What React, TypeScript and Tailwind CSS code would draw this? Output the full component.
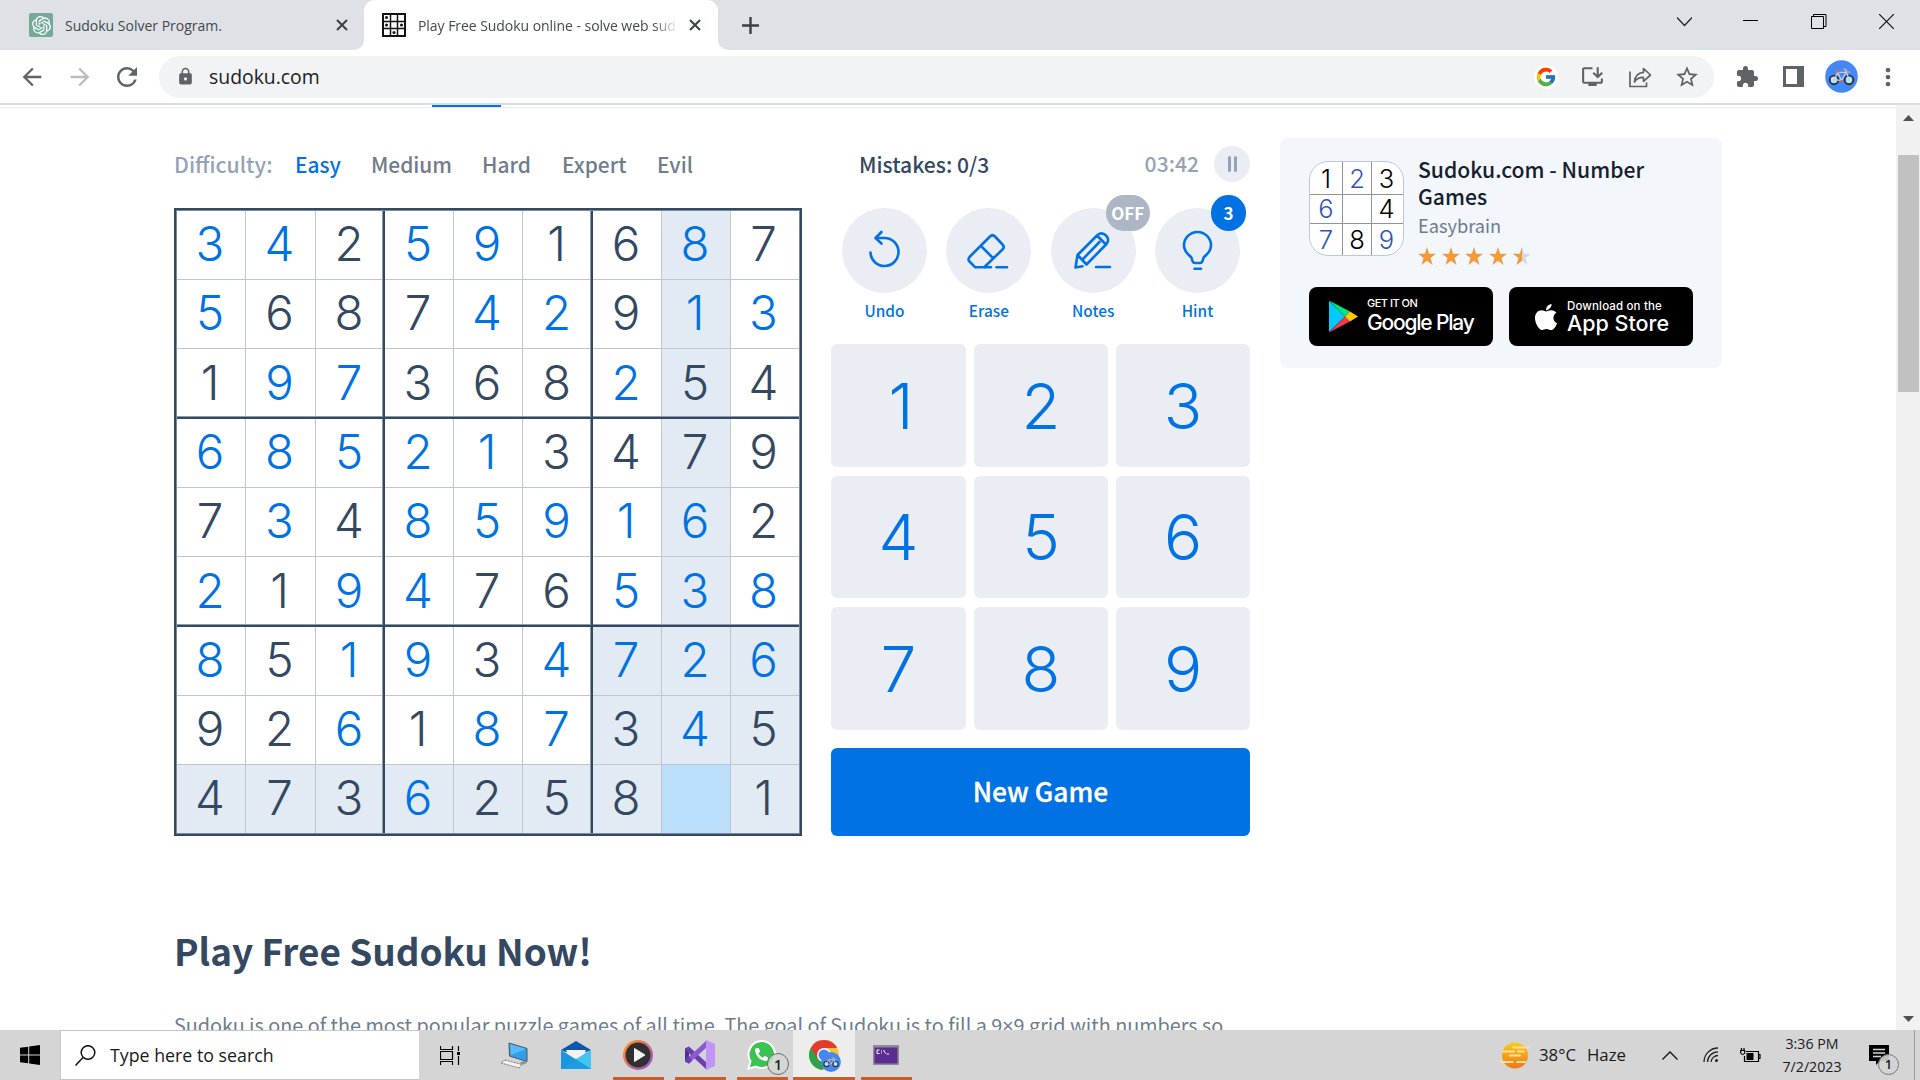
import type { ReactNode } from "react";
import { FcGoogle } from "react-icons/fc";
import { SiOpenai } from "react-icons/si";
import { FaApple, FaPhoneAlt } from "react-icons/fa";
import { MdArrowBack, MdArrowForward, MdRefresh, MdLock, MdInstallDesktop, MdStarBorder, MdExtension, MdMoreVert } from "react-icons/md";

/* digit rows; "b" after a digit marks a value entered by the player */
const ROWS = [
  "3b 4b 2 5b 9b 1 6 8b 7",
  "5b 6 8 7 4b 2b 9 1b 3b",
  "1 9b 7b 3 6 8 2b 5 4",
  "6b 8b 5b 2b 1b 3 4 7 9",
  "7 3b 4 8b 5b 9b 1b 6b 2",
  "2b 1 9b 4b 7 6 5b 3b 8b",
  "8b 5 1b 9b 3 4b 7b 2b 6b",
  "9 2 6b 1 8b 7b 3 4b 5",
  "4 7 3 6b 2 5 8 . 1",
].map((r) => r.split(" "));

const LINES: Record<string, string> = {
  "thin-thin": "shadow-[inset_-1px_0_#bec6d4,inset_0_-1px_#bec6d4]",
  "thick-thin": "shadow-[inset_-2px_0_#344861,inset_-3px_0_#8f9bab,inset_0_-1px_#bec6d4]",
  "none-thin": "shadow-[inset_0_-1px_#bec6d4]",
  "thin-thick": "shadow-[inset_0_-2px_#344861,inset_0_-3px_#8f9bab,inset_-1px_0_#bec6d4]",
  "thick-thick": "shadow-[inset_-2px_0_#344861,inset_0_-2px_#344861,inset_-3px_0_#8f9bab,inset_0_-3px_#8f9bab]",
  "none-thick": "shadow-[inset_0_-2px_#344861,inset_0_-3px_#8f9bab]",
  "thin-none": "shadow-[inset_-1px_0_#bec6d4]",
  "thick-none": "shadow-[inset_-2px_0_#344861,inset_-3px_0_#8f9bab]",
  "none-none": "",
};
const kind = (i: number) => (i === 8 ? "none" : i % 3 === 2 ? "thick" : "thin");

function cellBg(r: number, c: number) {
  if (r === 8 && c === 7) return "bg-[#bbdefb]";
  if (r === 8 || c === 7 || (r >= 6 && c >= 6)) return "bg-[#e2ebf3]";
  return "bg-white";
}

function Board() {
  return (
    <div className="h-[628px] w-[628px] border-2 border-[#344861]">
      <div className="grid h-full w-full grid-cols-[69px_70px_69px_69px_69px_70px_69px_69px_68px] grid-rows-[69px_69px_70px_69px_69px_70px_69px_69px_68px] border border-[#7d8a9c] font-[Inter,sans-serif] text-[47.500px] leading-none font-light">
        {ROWS.map((row, r) =>
          row.map((v, c) => (
            <div key={`${r}${c}`} className={`flex items-center justify-center pr-[3px] pb-[3px] ${cellBg(r, c)} ${LINES[`${kind(c)}-${kind(r)}`]} ${v.endsWith("b") ? "text-[#0072e3]" : "text-[#344861]"}`}>
              {v === "." ? "" : v[0]}
            </div>
          )),
        )}
      </div>
    </div>
  );
}

function BikeAvatar({ size }: { size: number }) {
  return (
    <svg width={size} height={size} viewBox="0 0 34 34" fill="none">
      <circle cx="17" cy="17" r="16.8" fill="#4487f6" />
      <circle cx="9.3" cy="20.5" r="4.4" fill="#b9e3f5" stroke="#27323c" strokeWidth="2" />
      <circle cx="24.7" cy="20.5" r="4.4" fill="#b9e3f5" stroke="#27323c" strokeWidth="2" />
      <path d="M9.3 20.5 13 13l9-.5-5 8.5-4-8M17 21l-7.700-.5M24.700 20.500 21.500 10" stroke="#c3cfe0" strokeWidth="1.300" />
      <path d="M10.500 11.800h4.500M17 20.500v2" stroke="#e5683f" strokeWidth="2" />
      <path d="M19 9.500h3M23 12.500h3" stroke="#f0a08a" strokeWidth="1.500" />
    </svg>
  );
}

function TabStrip() {
  return (
    <header className="flex h-[50px] bg-[#dee1e6] font-['Open_Sans',sans-serif] text-[14px] text-[#45484c]">
      <div className="flex w-[364px] items-center pl-[29px]">
        <div className="flex h-6 w-6 items-center justify-center rounded-[2px] bg-[#75a99c] text-white"><SiOpenai size={19} /></div>
        <span className="ml-3 w-[271px]">Sudoku Solver Program.</span>
        <svg width="12" height="12" viewBox="0 0 12 12" stroke="#3c4043" strokeWidth="2"><path d="M1 1l10 10M11 1L1 11" /></svg>
      </div>
      <div className="relative flex w-[354px] items-center rounded-t-[11px] bg-white pl-[18px]">
        <svg className="absolute bottom-0 -left-[10px]" width="10" height="10" fill="#fff"><path d="M10 0v10H0A10 10 0 0 0 10 0" /></svg>
        <svg className="absolute -right-[10px] bottom-0" width="10" height="10" fill="#fff"><path d="M0 0v10h10A10 10 0 0 1 0 0" /></svg>
        <svg width="24" height="24" viewBox="0 0 24 24" fill="none" stroke="#111">
          <path d="M1 1h22v22H1z" strokeWidth="2" />
          <path d="M8.500 1v22M15.500 1v22M1 8.500h22M1 15.500h22" strokeWidth="1.500" />
          <g fill="#111" stroke="none"><circle cx="4.500" cy="4.500" r="1.500" /><circle cx="4.500" cy="12" r="1.500" /><circle cx="19.500" cy="12" r="1.500" /><circle cx="12" cy="19.500" r="1.500" /></g>
        </svg>
        <span className="ml-3 w-[258px] overflow-hidden tracking-[-0.050px] whitespace-nowrap [mask-image:linear-gradient(to_right,#000_235px,transparent_260px)]">Play Free Sudoku online - solve web sudoku</span>
        <svg className="ml-[13px]" width="12" height="12" viewBox="0 0 12 12" stroke="#3c4043" strokeWidth="2"><path d="M1 1l10 10M11 1L1 11" /></svg>
      </div>
      <div className="flex w-[65px] items-center justify-center">
        <svg width="17" height="17" viewBox="0 0 17 17" stroke="#3c4043" strokeWidth="2.400"><path d="M8.500 0v17M0 8.500h17" /></svg>
      </div>
      <div className="ml-auto flex items-start pt-[14px] pr-[26px]">
        <svg width="15" height="15" viewBox="0 0 15 15" fill="none" stroke="#222" strokeWidth="1.200"><path d="M0 3.500l7.500 8 7.500-8" /></svg>
        <svg className="ml-[51px]" width="15" height="15" viewBox="0 0 15 15"><path d="M0 6h15v1H0z" /></svg>
        <svg className="ml-[53px]" width="16" height="15" viewBox="0 0 16 15" fill="none" stroke="#000"><path d="M.500 2.500h12v12h-12zM2.500 2V.500h12.500v12h-2" /></svg>
        <svg className="ml-[52px]" width="15" height="15" viewBox="0 0 15 15" stroke="#111" strokeWidth="1.200"><path d="M0 0l15 15M15 0L0 15" /></svg>
      </div>
    </header>
  );
}

function Toolbar() {
  return (
    <div className="flex h-[55px] items-center border-b-2 border-[#dcdcdc] bg-white pl-[18px] text-[#5f6368]">
      <MdArrowBack size={28} className="shrink-0" />
      <MdArrowForward size={28} className="ml-[20px] shrink-0 text-[#babcbe]" />
      <MdRefresh size={30} className="ml-[18px] shrink-0" />
      <div className="ml-[17px] flex h-[42px] w-[1555px] items-center rounded-full bg-[#f1f3f4] pl-[17px]">
        <MdLock size={19} />
        <span className="ml-[14px] font-['Open_Sans',sans-serif] text-[19.400px] text-[#202124]">sudoku.com</span>
        <div className="mr-[14px] ml-auto flex items-center">
          <span className="flex h-6 w-6 items-center justify-center rounded-full bg-white"><FcGoogle size={22} /></span>
          <MdInstallDesktop size={25} className="ml-[22px]" />
          <svg className="ml-[24px]" width="23" height="22" viewBox="0 0 23 22" fill="none" stroke="#5f6368" strokeWidth="1.700">
            <path d="M1 5.500V20.500h16.500v-4" />
            <path d="M5.500 16c.4-5.500 3.500-9.200 9-9.600V2.500l7 6.500-7 6.300v-3.900c-4.200 0-7 1.300-9 4.600z" strokeLinejoin="round" />
          </svg>
          <MdStarBorder size={26} className="ml-[22px]" />
        </div>
      </div>
      <MdExtension size={24} className="ml-[21px]" />
      <svg className="ml-[24px]" width="21" height="21" viewBox="0 0 21 21" fill="#5f6368"><path fillRule="evenodd" d="M0 0h21v21H0zM3 3v15h11V3z" /></svg>
      <span className="ml-[21px]"><BikeAvatar size={33} /></span>
      <MdMoreVert size={28} className="ml-[16px]" />
    </div>
  );
}

function Tool({ label, badge, badgeClass, children }: { label: string; badge?: string; badgeClass?: string; children: ReactNode }) {
  return (
    <div className="flex w-[85px] flex-col items-center">
      <div className="relative flex h-[85px] w-[85px] items-center justify-center rounded-full bg-[#eaeef4]">
        <svg width="44" height="44" viewBox="0 0 44 44" fill="none" stroke="#0072e3" strokeWidth="2.600" strokeLinecap="round" strokeLinejoin="round">{children}</svg>
        {badge && <span className={`absolute -top-[13px] flex h-9 items-center justify-center rounded-full pb-px text-[17px] leading-5 font-bold text-white ${badgeClass}`}>{badge}</span>}
      </div>
      <span className="mt-[7px] flex h-[22px] items-center text-[15.400px] font-medium text-[#0072e3]">{label}</span>
    </div>
  );
}

function Star({ half }: { half?: boolean }) {
  const d = "M8.500 0l2 6.400h6.500l-5.200 4 2 6.600-5.300-4.100L3.200 17l2-6.600L0 6.400h6.500z";
  return (
    <svg width="18" height="18" viewBox="0 0 17 17">
      <path d={d} fill={half ? "#d3d9e6" : "#f29a38"} />
      {half && <path d="M8.500 0v12.900L3.200 17l2-6.600L0 6.400h6.500z" fill="#f29a38" />}
    </svg>
  );
}

function AppCard() {
  return (
    <aside className="mt-[30px] ml-[30px] h-[230px] w-[442px] rounded-lg bg-[#f3f6fb] px-[29px] pt-[23px]">
      <div className="flex h-[118px]">
        <div className="grid h-[95px] w-[95px] shrink-0 grid-cols-[33px_29px_31px] grid-rows-[33px_29px_31px] overflow-hidden rounded-[19px] border border-[#bcc7da] bg-white font-[Inter,sans-serif] text-[25.500px] leading-none font-light">
          {["1", "2b", "3", "6b", "", "4", "7b", "8", "9b"].map((v, i) => (
            <span key={i} className={`flex items-center justify-center ${i % 3 < 2 ? "border-r border-r-[#8f939b]" : ""} ${i < 6 ? "border-b border-b-[#8f939b]" : ""} ${i < 3 ? "pt-0.5" : ""} ${i % 3 === 2 ? "pr-0.5" : ""} ${v.endsWith("b") ? "text-[#2f55b8]" : "text-black"}`}>{v[0]}</span>
          ))}
        </div>
        <div className="-mt-[6px] ml-[14px]">
          <div className="text-[21.150px] leading-[27px] font-medium text-[#14202e]">Sudoku.com - Number<br />Games</div>
          <div className="mt-[3px] text-[18.200px] leading-[26px] text-[#6e7c8c]">Easybrain</div>
          <div className="mt-[9px] flex gap-[5.700px]"><Star /><Star /><Star /><Star /><Star half /></div>
        </div>
      </div>
      <div className="mt-2 flex gap-4 font-[Inter,sans-serif] text-white">
        <div className="flex h-[59px] w-[184px] items-center rounded-lg bg-black pl-[20px]">
          <svg width="29" height="33" viewBox="0 0 29 33"><path d="M0 1v31l16-15.500z" fill="#00cbfb" /><path d="M0 .500l21 11-5 5z" fill="#00e676" /><path d="M0 32.500l21-11-5-5z" fill="#f5384b" /><path d="M21 11.500l8 5-8 5-5-5z" fill="#fdc900" /></svg>
          <div className="-mt-[1px] ml-[9px]">
            <div className="text-[11px] leading-[13px] font-medium tracking-[-0.500px]">GET IT ON</div>
            <div className="text-[21px] leading-[25px] font-medium tracking-[-1.200px]">Google Play</div>
          </div>
        </div>
        <div className="flex h-[59px] w-[184px] items-center rounded-lg bg-black pl-[22px]">
          <FaApple size={30} />
          <div className="ml-[6px]">
            <div className="text-[11.500px] leading-[14px] font-medium tracking-[0.150px]">Download on the</div>
            <div className="text-[21.500px] leading-[21px] font-medium">App Store</div>
          </div>
        </div>
      </div>
    </aside>
  );
}

function Page() {
  return (
    <main className="flex h-[925px] overflow-hidden bg-white font-['Noto_Sans_CJK_SC',sans-serif]">
      <div className="w-[1896px]">
        <div className="h-[3px] border-b border-[#e6eaf2]"><div className="ml-[432px] h-[2px] w-[69px] bg-[#0072e3]" /></div>
        <div className="flex pl-[174px]">
          <section className="w-[628px]">
            <nav className="mt-[41px] mb-[27px] flex h-8 items-center text-[20.900px] font-medium text-[#6e7c8c]">
              <span className="w-[121px] pb-0.5 text-[21.300px] text-[#94a3b7]">Difficulty:</span>
              <span className="w-[76px] text-[#0072e3]">Easy</span>
              <span className="w-[111px]">Medium</span>
              <span className="w-[80px]">Hard</span>
              <span className="w-[95px]">Expert</span>
              <span>Evil</span>
            </nav>
            <Board />
          </section>
          <section className="ml-[29px] w-[419px]">
            <div className="mt-[38px] mb-[26px] flex h-9 items-center pl-[28px] text-[21.100px] font-medium text-[#344861]">
              <span className="pt-0.5">Mistakes: 0/3</span>
              <span className="ml-auto text-[#94a3b7]">03:42</span>
              <span className="ml-[15px] flex h-9 w-9 items-center justify-center gap-[3px] rounded-full bg-[#eaeef4]">
                <i className="h-4 w-[3px] rounded-full bg-[#94a3b7]" /><i className="h-4 w-[3px] rounded-full bg-[#94a3b7]" />
              </span>
            </div>
            <div className="flex justify-between pr-[10px] pl-[11px]">
              <Tool label="Undo">
                <path d="M7.500 23.500a14 14 0 1 0 14-14.500h-8" /><path d="M18.500 3l-6 6 6 5.500" />
              </Tool>
              <Tool label="Erase">
                <path d="M9 38.300h15M29.500 38.300h10.500" /><path d="M17.500 38l18-17.500q2.500-2.500 0-5l-7.500-8q-2.500-2.500-5 0L3 27.500q-3 3 0 5.500l5 5.200M14.500 17.500l11.500 11.500" />
              </Tool>
              <Tool label="Notes" badge="OFF" badgeClass="left-[55px] w-11 bg-[#adb6c5]">
                <path d="M6.500 26L26.500 6q4.500-3.500 8.500.5t.5 8.500L15.500 35.500 6.500 26zl-2 12.500 7-1.200M26 6.500l9 9M12 30L28.500 13M25 38h14" />
              </Tool>
              <Tool label="Hint" badge="3" badgeClass="left-[56px] w-[35px] bg-[#0072e3]">
                <path d="M16 28c-3-2.500-7-5.500-7-11.500a13.500 13.500 0 0 1 27 0c0 6-4 9-7 11.500-1.500 1.500-.5 6-4 6h-5c-3.500 0-2.500-4.500-4-6zM19.500 39.800h6.500" />
              </Tool>
            </div>
            <div className="mt-[22px] grid h-[386px] grid-cols-[135px_134px_134px] grid-rows-3 gap-x-2 gap-y-[9px] font-[Inter,sans-serif] text-[63.500px] leading-none font-light text-[#0072e3]">
              {[1, 2, 3, 4, 5, 6, 7, 8, 9].map((n) => (
                <button key={n} className={`flex items-center justify-center rounded-md bg-[#eaeef4] ${n < 4 ? "pt-px" : ""} ${n === 1 ? "pl-[5px]" : ""}`}>{n}</button>
              ))}
            </div>
            <button className="mt-[18px] flex h-[88px] w-full items-center justify-center rounded-md bg-[#0072e3] pb-0.5 text-[26.400px] font-medium text-white [-webkit-text-stroke:0.300px_#fff]">New Game</button>
          </section>
          <AppCard />
        </div>
        <article className="pl-[174px]">
          <h1 className="mt-[94px] flex h-10 items-center text-[36.900px] leading-none font-bold text-[#344861]">Play Free Sudoku Now!</h1>
          <p className="mt-10 h-[30px] text-[19.800px] leading-[30px] whitespace-nowrap text-[#6e7c8c]">
            Sudoku is one of the most popular puzzle games of all time. The goal of Sudoku is to fill a 9<span className="font-['Noto_Sans',sans-serif]">×</span>9 grid with numbers so
          </p>
        </article>
      </div>
      <div className="flex w-6 flex-col items-center bg-[#f1f1f1] pt-[10px] pb-[8px]">
        <svg width="11" height="6" viewBox="0 0 11 6" fill="#505050"><path d="M5.500 0L11 6H0z" /></svg>
        <div className="mt-[34px] h-[237px] w-[21px] bg-[#c1c1c1]" />
        <svg className="mt-auto" width="11" height="6" viewBox="0 0 11 6" fill="#505050"><path d="M5.500 6L11 0H0z" /></svg>
      </div>
    </main>
  );
}

function TaskItem({ running, active, children }: { running?: boolean; active?: boolean; children: ReactNode }) {
  return (
    <div className={`flex h-[50px] w-[62px] flex-col items-center ${active ? "bg-[#ededed]" : ""}`}>
      <div className="relative flex h-[47px] items-center pt-[3px]">{children}</div>
      {running && <div className={`h-[3px] bg-[#c95d2a] ${active ? "w-[62px]" : "w-[51px]"}`} />}
    </div>
  );
}

function Taskbar() {
  return (
    <footer className="flex h-[50px] items-center bg-[#d5d5d6] font-['Open_Sans',sans-serif] text-[#1a1a1a]">
      <div className="flex w-[60px] justify-center">
        <svg width="20" height="20" viewBox="0 0 20 20"><path d="M0 2.800l8.200-1.100v7.800H0zM9.200 1.500L20 0v9.500H9.200zM0 10.500h8.200v7.800L0 17.200zM9.200 10.500H20V20L9.200 18.500z" /></svg>
      </div>
      <div className="flex h-[50px] w-[359px] items-center border border-r-0 border-[#c6c6c6] bg-white pl-[14px]">
        <svg width="21" height="21" viewBox="0 0 21 21" fill="none" stroke="#111" strokeWidth="1.500"><circle cx="13" cy="7.500" r="6.800" /><path d="M8.200 12.300L.500 20.500" /></svg>
        <span className="ml-[14px] text-[17.800px]">Type here to search</span>
      </div>
      <div className="flex w-[61px] justify-center">
        <svg width="20" height="19" viewBox="0 0 20 19" fill="none" stroke="#000"><path d="M.500 0v3.500h12V0M.500 5.500h12v8H.500zM.500 19v-3.500h12V19M18.500 0v5M18.500 10v9" strokeWidth="1.200" /><path d="M17 6h3v3h-3z" fill="#000" stroke="none" /></svg>
      </div>
      <div className="flex pl-[3px]">
        <TaskItem>
          <svg width="29" height="27" viewBox="0 0 29 27">
            <path d="M9 1l18 5.500v13L9.500 14z" fill="#2f9fee" stroke="#4a545c" /><path d="M10 2l16 5-15 6z" fill="#55bbfa" />
            <path d="M5 18l17 4.500-3 3.500L1 21z" fill="#f2f2f2" stroke="#777" strokeDasharray="2 1" /><path d="M20 20l6-1 1 2-5 2z" fill="#8a9095" />
          </svg>
        </TaskItem>
        <TaskItem>
          <svg width="30" height="28" viewBox="0 0 30 28"><path d="M0 9L15 0l15 9-5 2H5z" fill="#0b56a8" /><path d="M5 9h20l-4 8H9z" fill="#f2f2f4" /><path d="M0 9l15 9.500L30 9v19H0z" fill="#1b96de" /><path d="M15 18.500L30 9v19z" fill="#41c6f3" /><path d="M0 28h30L15 18.500z" fill="#1d9ce2" /></svg>
        </TaskItem>
        <TaskItem running>
          <svg width="30" height="30" viewBox="0 0 30 30"><defs><linearGradient id="ring" x2="1" y2="1"><stop offset=".2" stopColor="#f58a3c" /><stop offset=".85" stopColor="#9a55c4" /></linearGradient></defs><circle cx="15" cy="15" r="15" fill="url(#ring)" /><circle cx="15" cy="15" r="12.500" fill="#303030" /><path d="M11.500 8.500l10.500 6.500-10.500 6.500z" fill="#f4f4f4" stroke="#f4f4f4" strokeLinejoin="round" /></svg>
        </TaskItem>
        <TaskItem running>
          <svg width="30" height="30" viewBox="0 0 30 30"><path d="M0 8.500l4-2v17l-4-2z" fill="#52318b" /><path d="M4 6.500L22 23v7L0 9.500z" fill="#6b3fb0" /><path d="M4 23.500L22 7V0L0 20.500z" fill="#8a5ad0" /><path d="M0 21.500V20l4-4 3 5-3 2.500z" fill="#6b42ad" /><path d="M21 0l9 4v22l-9 4z" fill="#c293f8" /><path d="M21 9v12l-6-6z" fill="#d5d5d6" /></svg>
        </TaskItem>
        <TaskItem running>
          <span className="relative flex">
            <svg width="30" height="30" viewBox="0 0 30 30"><path d="M15.200 0A14.500 14.500 0 0 0 2.500 21.800L0 30l8.600-2.300A14.500 14.500 0 1 0 15.200 0z" fill="#fff" /><path d="M15.200 2A12.500 12.500 0 0 0 4.600 21.300L2.800 27.200l6-1.600A12.500 12.500 0 1 0 15.200 2z" fill="#3ac351" /></svg>
            <FaPhoneAlt size={13} className="absolute top-2 left-2 -scale-x-100 rotate-90 text-white" />
          </span>
          <span className="absolute top-[23px] left-[20px] flex h-[22px] w-[22px] items-center justify-center rounded-full border border-[#6c6c6c] bg-[#d4d6d4]/85 text-[14px] font-semibold">1</span>
        </TaskItem>
        <TaskItem running active>
          <svg width="30" height="30" viewBox="0 0 30 30"><circle cx="15" cy="15" r="15" fill="#fbc52f" /><path d="M15 15L2 7.500A15 15 0 0 0 13.500 30l6.500-11z" fill="#2da24c" /><path d="M15 15V8h13.200A15 15 0 0 0 2 7.500L8.500 19z" fill="#e33b2e" /><circle cx="15" cy="15" r="7" fill="#fff" /><circle cx="15" cy="15" r="5.500" fill="#4287f5" /></svg>
          <span className="absolute top-[22px] left-[12px]"><BikeAvatar size={20} /></span>
        </TaskItem>
        <TaskItem running>
          <svg width="26" height="20" viewBox="0 0 26 20"><path d="M0 0h26v20H0z" fill="#8c8c94" /><path d="M1.500 2.500h23v16h-23z" fill="#5c2d91" /><path d="M6.500 5H4v3.500h2.500M8.500 5.500v1M8.500 7.500v1M10.500 5l2 3.500M13.500 9H16" fill="none" stroke="#fff" /></svg>
        </TaskItem>
      </div>
      <div className="ml-auto flex h-full items-center text-[16.800px]">
        <svg width="30" height="27" viewBox="0 0 30 27"><defs><linearGradient id="sun" x2="0" y2="1"><stop stopColor="#fccb12" /><stop offset="1" stopColor="#f0761c" /></linearGradient></defs><circle cx="15" cy="13.500" r="13" fill="url(#sun)" /><path d="M13 5.500h16.500M3 9.500h11M18 9.500h6M10 13.500h10M0 20h13M17 20h8" stroke="#f9dfa6" strokeWidth="1.800" strokeLinecap="round" /></svg>
        <span className="ml-[9px] w-[48px]">38°C</span>
        <span className="w-[75px]">Haze</span>
        <svg width="16" height="9" viewBox="0 0 16 9" fill="none" stroke="#111" strokeWidth="1.300"><path d="M.500 8.500L8 1l7.500 7.500" /></svg>
        <svg className="ml-[25px]" width="16" height="16" viewBox="0 0 16 16" fill="none" stroke="#222" strokeWidth="1.300"><path d="M1 15A14 14 0 0 1 15 1M4.500 15A10.500 10.500 0 0 1 15 4.800M8 15a7 7 0 0 1 7-6.500" /><circle cx="13.500" cy="13.500" r="1.500" fill="#222" stroke="none" /></svg>
        <svg className="ml-[21px]" width="21" height="15" viewBox="0 0 21 15" fill="none" stroke="#000" strokeWidth="1.200"><path d="M6 3.500h12.500v10H4.500V8M18.500 6.500h1.500v4h-1.500M.700 2.500v2.500q2 3 4 0V2.500zM1.500 2V0M4 2V0" /><path d="M6.500 5h7v7h-7z" fill="#000" stroke="none" /></svg>
        <div className="ml-[15px] flex w-[72px] flex-col items-center text-[14.200px] leading-[23px]"><span>3:36 PM</span><span>7/2/2023</span></div>
        <div className="relative ml-[21px]">
          <svg width="20" height="20" viewBox="0 0 20 20"><path d="M0 0h20v16h-9l-4 4v-4H0z" /><path d="M4 4.500h12M4 8h12M4 11.500h8" stroke="#d5d5d6" strokeWidth="1.400" /></svg>
          <span className="absolute top-[9px] left-[9px] flex h-[21px] w-[21px] items-center justify-center rounded-full border border-[#777] bg-[#d4d4d4]/90 text-[13px] font-semibold">1</span>
        </div>
        <div className="ml-[25px] h-full w-[6px] border-l border-[#9c9c9c]" />
      </div>
    </footer>
  );
}

export default function App() {
  return (
    <div className="flex h-[1080px] w-[1920px] flex-col overflow-hidden bg-white">
      <TabStrip />
      <Toolbar />
      <Page />
      <Taskbar />
    </div>
  );
}
